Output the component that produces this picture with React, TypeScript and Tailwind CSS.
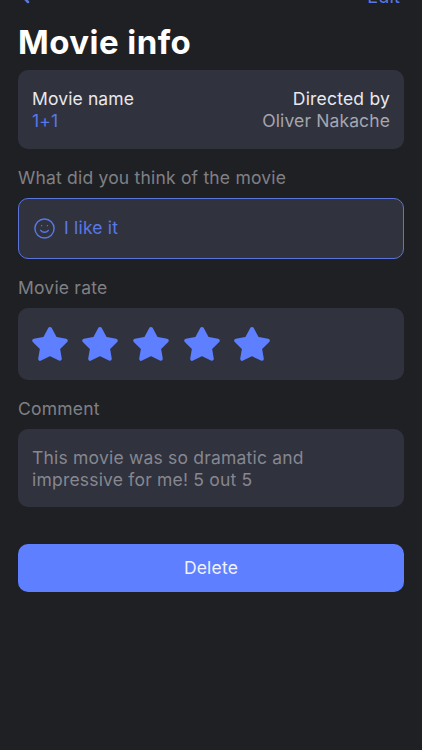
import { ChevronLeft, Smile } from "lucide-react"

function Star() {
  return (
    <svg width="38" height="36" viewBox="0 0 38 36" className="text-[#5e7fff]">
      <path
        d="M19 3 L24.2 12.8 L34.8 14.6 L27 22.3 L28.8 32.8 L19 28 L9.2 32.8 L11 22.3 L3.2 14.6 L13.8 12.8 Z"
        fill="currentColor"
        stroke="currentColor"
        strokeWidth="4"
        strokeLinejoin="round"
      />
    </svg>
  )
}

export default function App() {
  return (
    <div className="h-[750px] w-[422px] overflow-hidden bg-[#1f2024] px-[18px] font-['Inter',sans-serif]">
      <div className="-mt-[14px] flex h-[20px] items-center justify-between pr-[4px] text-[#5878e8]">
        <ChevronLeft size={24} strokeWidth={2.5} className="-ml-[5px]" />
        <span className="text-[18px] tracking-[0.15px]">Edit</span>
      </div>

      <h1 className="mt-[15px] h-[42px] text-[33px] leading-[42px] font-bold tracking-[0.45px] text-white">Movie info</h1>

      <div className="mt-[7px] flex h-[79px] items-center justify-between rounded-[10px] bg-[#30323d] px-[14px] text-[17.5px] leading-[22px] tracking-[0.12px]">
        <div>
          <p className="text-[#e8e8ee]">Movie name</p>
          <p className="text-[#5878e8]">1+1</p>
        </div>
        <div className="text-right">
          <p className="tracking-[0.2px] text-[#e8e8ee]">Directed by</p>
          <p className="text-[#a5a6b0]">Oliver Nakache</p>
        </div>
      </div>

      <p className="mt-[18px] h-[22px] text-[17.5px] leading-[22px] tracking-[0.2px] text-[#808084]">What did you think of the movie</p>

      <div className="mt-[9px] flex h-[61px] items-center gap-[8px] rounded-[10px] border-[1.5px] border-[#5a74dc] bg-[#30323d] px-[14px] text-[#5878e8]">
        <Smile size={23} strokeWidth={1.5} />
        <span className="text-[17.5px] tracking-[0.2px]">I like it</span>
      </div>

      <p className="mt-[18px] h-[22px] text-[17.5px] leading-[22px] tracking-[0.2px] text-[#808084]">Movie rate</p>

      <div className="mt-[9px] flex h-[72px] items-center gap-[12.7px] rounded-[10px] bg-[#30323d] pl-[12.5px]">
        <Star />
        <Star />
        <Star />
        <Star />
        <Star />
      </div>

      <p className="mt-[18px] h-[22px] text-[17.5px] leading-[22px] tracking-[0.2px] text-[#808084]">Comment</p>

      <div className="mt-[9px] flex h-[78px] items-center rounded-[10px] bg-[#30323d] px-[14px] pt-[2px] text-[17.5px] leading-[22px] tracking-[0.2px] text-[#868790]">
        <p>
          This movie was so dramatic and
          <br />
          impressive for me! 5 out 5
        </p>
      </div>

      <button className="mt-[37px] flex h-[48px] w-full items-center justify-center rounded-[10px] bg-[#5e7fff] text-[17.5px] tracking-[0.2px] text-[#f0f2ff]">
        Delete
      </button>
    </div>
  )
}
